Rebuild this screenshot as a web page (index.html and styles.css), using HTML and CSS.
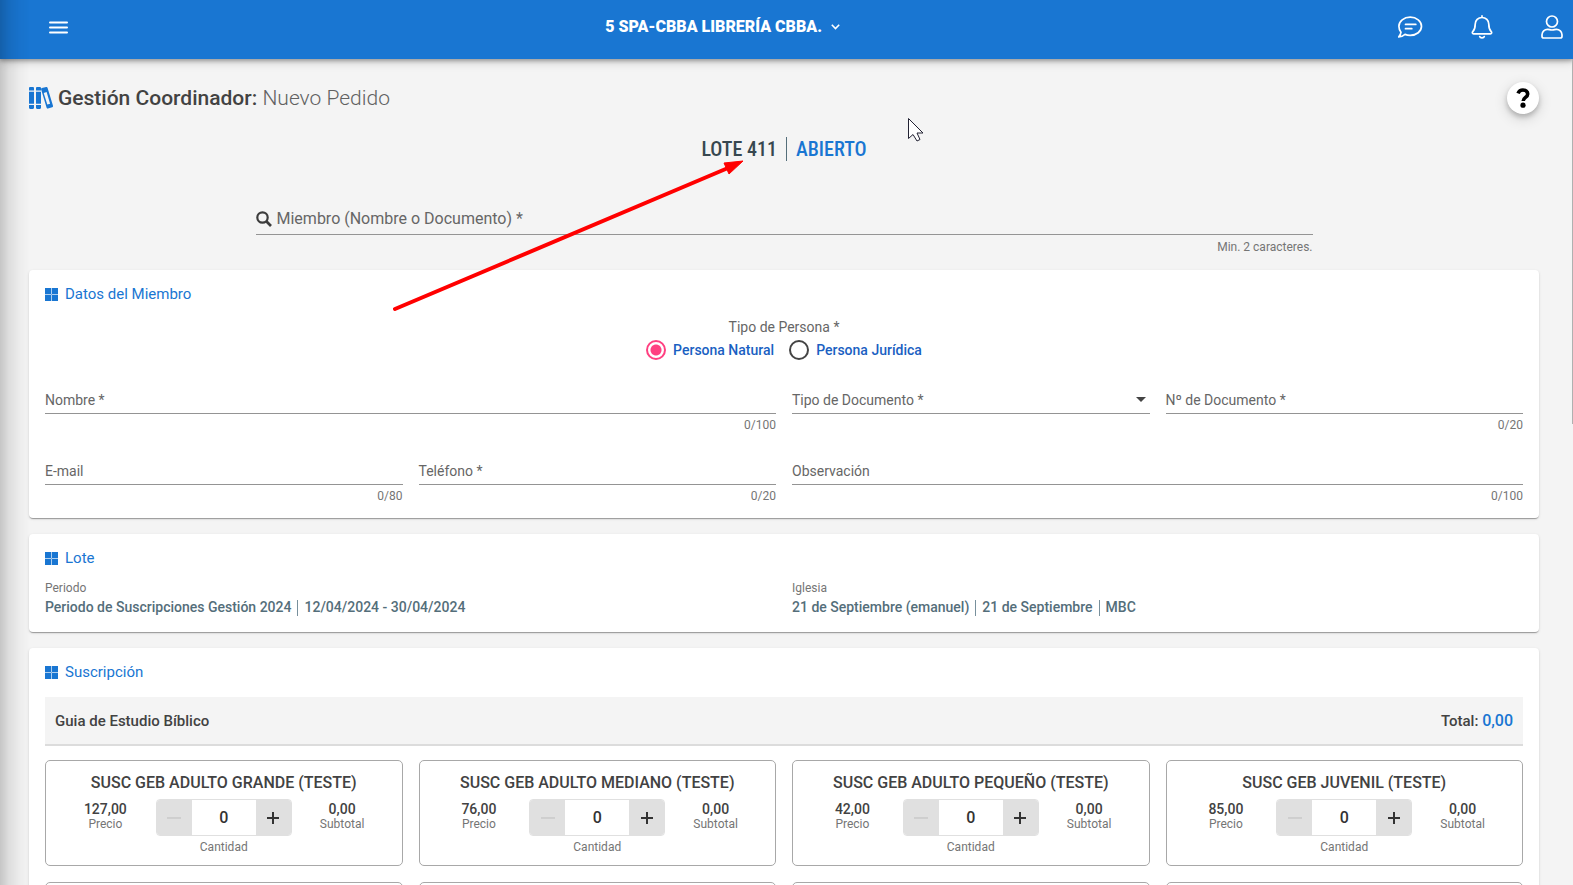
FILE: index.html
```html
<!DOCTYPE html>
<html lang="es">
<head>
<meta charset="utf-8">
<title>Gestión Coordinador: Nuevo Pedido</title>
<meta name="viewport" content="width=device-width, initial-scale=1">
<link rel="stylesheet" href="styles.css">
</head>
<body>
<svg class="sprite" aria-hidden="true">
  <symbol id="i-grid" viewBox="0 0 13 13"><path d="M0 0h6v6H0zM7 0h6v6H7zM0 7h6v6H0zM7 7h6v6H7z" fill="currentColor"/><path d="M6.500 0v13M0 6.500h13" stroke="currentColor" stroke-opacity=".35"/></symbol>
  <symbol id="i-plus" viewBox="0 0 14 14"><path d="M7 1v12M1 7h12" stroke="currentColor" stroke-width="2" fill="none"/></symbol>
  <symbol id="i-minus" viewBox="0 0 14 14"><path d="M0 7h14" stroke="currentColor" stroke-width="1" fill="none"/></symbol>
</svg>

<header class="topbar">
  <button class="icon-btn" type="button" aria-label="Menú">
    <svg width="19" height="13" viewBox="0 0 19 13"><path d="M1 1.500h17M1 6.500h17M1 11.500h17" stroke="#fff" stroke-width="2" stroke-linecap="round"/></svg>
  </button>
  <button class="branch" type="button">5 SPA-CBBA LIBRERÍA CBBA.
    <svg width="9" height="6" viewBox="0 0 9 6"><path d="M.8.8 4.500 4.600 8.200.8" fill="none" stroke="#fff" stroke-width="1.600"/></svg>
  </button>
  <nav class="actions" aria-label="Cuenta">
    <button class="icon-btn" type="button" aria-label="Mensajes">
      <svg width="26" height="24" viewBox="0 0 26 24" fill="none" stroke="#fff" stroke-width="1.700" stroke-linejoin="round" stroke-linecap="round"><path d="M13.200 2.200c6.300 0 11.300 4 11.300 9.100s-5 9.100-11.300 9.100c-1.900 0-3.600-.3-5.200-1-1.700 1.500-4 2.500-6.200 2.500 1.200-1.300 2-3 2.200-4.700C2.700 15.600 1.900 13.500 1.900 11.300c0-5.100 5-9.100 11.300-9.100z"/><path d="M8.500 9.400h10.300M8.500 13.700h6.300"/></svg>
    </button>
    <button class="icon-btn" type="button" aria-label="Notificaciones">
      <svg width="22" height="24" viewBox="0 0 22 24" fill="none" stroke="#fff" stroke-width="1.700" stroke-linejoin="round" stroke-linecap="round"><path d="M11 .9v1.500M11 2.500c3.900 0 6.800 2.900 6.800 6.700 0 5 1.200 6.200 2.400 7.400.9.900.5 2.200-.8 2.200H2.600c-1.300 0-1.700-1.300-.8-2.200 1.200-1.200 2.400-2.400 2.400-7.400 0-3.800 2.900-6.700 6.800-6.700z"/><path d="M8.700 21.500c.5 1.800 4.100 1.800 4.600 0"/></svg>
    </button>
    <button class="icon-btn" type="button" aria-label="Perfil">
      <svg width="22" height="24" viewBox="0 0 22 24" fill="none" stroke="#fff" stroke-width="1.700" stroke-linejoin="round"><circle cx="11" cy="6.500" r="5.500"/><path d="M6.600 14.300c1.700 0 2.100.7 4.400.7s2.700-.7 4.400-.7c3 0 5.600 2.400 5.600 5.500v1.400c0 1-.8 1.800-1.800 1.800H2.800c-1 0-1.800-.8-1.800-1.800v-1.400c0-3.100 2.600-5.500 5.600-5.500z"/></svg>
    </button>
  </nav>
</header>

<main class="page">
  <div class="page-head">
    <svg class="books" width="24" height="22" viewBox="0 0 24 22" fill="#1976d2"><path d="M0 1.200C0 .5.500 0 1.200 0h2.600C4.500 0 5 .5 5 1.200V3.600H0zM0 4.800h5v12H0zM0 18h5v2.800c0 .7-.5 1.200-1.200 1.200H1.200C.5 22 0 21.500 0 20.800zM7 1.200C7 .5 7.500 0 8.200 0h2.600c.7 0 1.200.5 1.200 1.200V3.600H7zM7 4.800h5v12H7zM7 18h5v2.800c0 .7-.5 1.200-1.200 1.200H8.200C7.500 22 7 21.500 7 20.800z"/><path fill-rule="evenodd" d="M12 2.100c0-.6.300-1 .9-1.200L17.200.1c.7-.2 1.200.2 1.400.9L24 18.800c.2.700-.2 1.300-.8 1.500l-4.200 1.300c-.7.200-1.200-.2-1.400-.8zM14.700 6l3.600 11.500 2.800-.8L17.600 5z"/></svg>
    <h1>Gestión Coordinador: <span>Nuevo Pedido</span></h1>
    <button class="help" type="button" aria-label="Ayuda">
      <svg width="14" height="20" viewBox="0 0 14 20"><path d="M2 5.400C3 3.100 4.600 2 6.900 2c2.900 0 4.800 1.600 4.800 3.900 0 3.500-4.500 3.400-4.500 7" fill="none" stroke="#000" stroke-width="3.600"/><circle cx="7" cy="17.200" r="2.600"/></svg>
    </button>
  </div>

  <p class="lot"><strong>LOTE 411</strong><i></i><strong class="open">ABIERTO</strong></p>

  <div class="search field">
    <div class="control">
      <label for="miembro"><svg width="16" height="16" viewBox="0 0 16 16" fill="none" stroke="#3c3c3c"><circle cx="6.500" cy="6.500" r="5.200" stroke-width="2.200"/><path d="m10.300 10.300 4.700 4.700" stroke-width="2.700"/></svg>Miembro (Nombre o Documento) *</label>
      <input id="miembro" type="text">
    </div>
    <small>Min. 2 caracteres.</small>
  </div>

  <section class="card">
    <h2><svg width="13" height="13"><use href="#i-grid"/></svg>Datos del Miembro</h2>
    <fieldset class="person">
      <legend>Tipo de Persona *</legend>
      <div class="radios">
        <label><input type="radio" name="persona" checked>Persona Natural</label>
        <label><input type="radio" name="persona">Persona Jurídica</label>
      </div>
    </fieldset>
    <div class="grid form">
      <div class="field wide"><div class="control"><label for="nombre">Nombre *</label><input id="nombre" type="text" maxlength="100"></div><small>0/100</small></div>
      <div class="field"><div class="control"><label for="tipo">Tipo de Documento *</label><select id="tipo"><option></option></select><svg class="caret" width="10" height="5" viewBox="0 0 10 5"><path d="M0 0h10L5 5z" fill="#444"/></svg></div></div>
      <div class="field"><div class="control"><label for="doc">Nº de Documento *</label><input id="doc" type="text" maxlength="20"></div><small>0/20</small></div>
      <div class="field"><div class="control"><label for="email">E-mail</label><input id="email" type="email" maxlength="80"></div><small>0/80</small></div>
      <div class="field"><div class="control"><label for="tel">Teléfono *</label><input id="tel" type="tel" maxlength="20"></div><small>0/20</small></div>
      <div class="field wide"><div class="control"><label for="obs">Observación</label><input id="obs" type="text" maxlength="100"></div><small>0/100</small></div>
    </div>
  </section>

  <section class="card">
    <h2><svg width="13" height="13"><use href="#i-grid"/></svg>Lote</h2>
    <dl class="grid facts">
      <div class="wide"><dt>Periodo</dt><dd>Periodo de Suscripciones Gestión 2024<i></i>12/04/2024 - 30/04/2024</dd></div>
      <div class="wide"><dt>Iglesia</dt><dd>21 de Septiembre (emanuel)<i></i>21 de Septiembre<i></i>MBC</dd></div>
    </dl>
  </section>

  <section class="card">
    <h2><svg width="13" height="13"><use href="#i-grid"/></svg>Suscripción</h2>
    <div class="group"><h3>Guia de Estudio Bíblico</h3><p>Total: <b>0,00</b></p></div>
    <div class="grid products">
      <article class="product">
        <h4>SUSC GEB ADULTO GRANDE (TESTE)</h4>
        <div class="order">
          <p><b>127,00</b>Precio</p>
          <div class="qty"><div class="stepper"><button type="button" disabled aria-label="Restar"><svg width="14" height="14"><use href="#i-minus"/></svg></button><input id="q1" type="text" value="0"><button type="button" aria-label="Sumar"><svg width="14" height="14"><use href="#i-plus"/></svg></button></div><label for="q1">Cantidad</label></div>
          <p><b>0,00</b>Subtotal</p>
        </div>
      </article>
      <article class="product">
        <h4>SUSC GEB ADULTO MEDIANO (TESTE)</h4>
        <div class="order">
          <p><b>76,00</b>Precio</p>
          <div class="qty"><div class="stepper"><button type="button" disabled aria-label="Restar"><svg width="14" height="14"><use href="#i-minus"/></svg></button><input id="q2" type="text" value="0"><button type="button" aria-label="Sumar"><svg width="14" height="14"><use href="#i-plus"/></svg></button></div><label for="q2">Cantidad</label></div>
          <p><b>0,00</b>Subtotal</p>
        </div>
      </article>
      <article class="product">
        <h4>SUSC GEB ADULTO PEQUEÑO (TESTE)</h4>
        <div class="order">
          <p><b>42,00</b>Precio</p>
          <div class="qty"><div class="stepper"><button type="button" disabled aria-label="Restar"><svg width="14" height="14"><use href="#i-minus"/></svg></button><input id="q3" type="text" value="0"><button type="button" aria-label="Sumar"><svg width="14" height="14"><use href="#i-plus"/></svg></button></div><label for="q3">Cantidad</label></div>
          <p><b>0,00</b>Subtotal</p>
        </div>
      </article>
      <article class="product">
        <h4>SUSC GEB JUVENIL (TESTE)</h4>
        <div class="order">
          <p><b>85,00</b>Precio</p>
          <div class="qty"><div class="stepper"><button type="button" disabled aria-label="Restar"><svg width="14" height="14"><use href="#i-minus"/></svg></button><input id="q4" type="text" value="0"><button type="button" aria-label="Sumar"><svg width="14" height="14"><use href="#i-plus"/></svg></button></div><label for="q4">Cantidad</label></div>
          <p><b>0,00</b>Subtotal</p>
        </div>
      </article>
      <article class="product"></article>
      <article class="product"></article>
      <article class="product"></article>
      <article class="product"></article>
    </div>
  </section>
</main>

<div class="drawer-shadow"></div>
<div class="scroll-thumb"></div>
<svg class="arrow" width="350" height="152" viewBox="0 0 350 152" aria-hidden="true"><path d="M2 149 335 8" stroke="#f00" stroke-width="4" stroke-linecap="round"/><path d="M350 1 331 3 336 14z" fill="#f00" stroke="#f00"/></svg>
<svg class="pointer" width="16" height="24" viewBox="0 0 16 24" aria-hidden="true"><path d="M.5.500v20l4.500-4 4 6.500 3-1.500-3-6.500h6z" fill="#fff" stroke="#223" stroke-width="1"/></svg>
</body>
</html>
```

FILE: styles.css
```css
* { box-sizing: border-box; margin: 0; padding: 0; }

html, body { height: 100%; }

body {
  background: #f4f4f4;
  color: #424242;
  font: 400 14px/20px Roboto, "Liberation Sans", sans-serif;
  overflow: hidden;
}

button, input, select { font: inherit; color: inherit; border: 0; background: none; }
button { cursor: pointer; }
svg { display: block; flex: none; }
.sprite { position: absolute; width: 0; height: 0; }

/* Top bar */
.topbar {
  position: relative;
  z-index: 1;
  height: 59px;
  padding: 0 10px 5px 49px;
  display: grid;
  grid-template-columns: 10fr auto 13fr;
  align-items: center;
  background: #1976d2;
  color: #fff;
  box-shadow: 0 2px 4px rgba(0, 0, 0, .3), 0 3px 10px rgba(0, 0, 0, .14);
}
.icon-btn { justify-self: start; }
.branch {
  display: flex;
  align-items: center;
  gap: 9px;
  font-size: 16px;
  font-weight: 900;
}
.actions { display: flex; justify-content: flex-end; align-items: center; gap: 48px; }

/* Page */
.page { padding: 23px 34px 0 29px; }
.page-head { display: flex; align-items: center; gap: 5px; }
h1 { flex: 1; font-size: 21px; line-height: 32px; font-weight: 500; }
h1 span { font-weight: 300; color: #616161; }
.help {
  width: 32px;
  height: 32px;
  display: grid;
  place-items: center;
  border-radius: 50%;
  background: #fff;
  box-shadow: 0 3px 5px rgba(0, 0, 0, .2), 0 4px 14px rgba(0, 0, 0, .16);
}

.lot {
  display: flex;
  justify-content: center;
  align-items: center;
  gap: 9px;
  margin-top: 23px;
  font: 500 20px/24px "Roboto Condensed", Roboto, sans-serif;
  color: #37474f;
}
.lot strong { font-weight: 500; }
.lot i { width: 1px; height: 24px; background: #546e7a; }
.lot .open { color: #1976d2; }

/* Fields with an underline */
.field { color: #666; }
.control {
  display: grid;
  align-items: center;
  border-bottom: 1px solid #949494;
}
.control > * { grid-area: 1 / 1; }
.control label { display: flex; align-items: center; gap: 5px; height: 27px; }
.control input, .control select { width: 100%; height: 27px; appearance: none; outline: none; }
.caret { justify-self: end; margin-right: 4px; }
.field small { display: block; height: 22px; font-size: 12px; line-height: 22px; text-align: right; color: #757575; }
.search { width: 70%; margin: 45px auto 0; font-size: 16px; }
.search .control label { height: 28px; padding-bottom: 2px; }
.search small { line-height: 25px; }

/* Cards */
.card {
  margin-bottom: 16px;
  padding: 12px 16px 11px;
  border-radius: 4px;
  background: #fff;
  box-shadow: 0 2px 1px -1px rgba(0, 0, 0, .2), 0 1px 1px rgba(0, 0, 0, .14), 0 1px 3px rgba(0, 0, 0, .12);
}
.search + .card { margin-top: 13px; }
h2 {
  display: flex;
  align-items: center;
  gap: 7px;
  font-size: 15px;
  line-height: 24px;
  font-weight: 400;
  color: #1976d2;
}
.grid { display: grid; grid-template-columns: repeat(4, minmax(0, 1fr)); column-gap: 16px; }
.wide { grid-column: span 2; }

.person { border: 0; margin-top: 10px; }
.person legend { margin: 0 auto; color: #666; line-height: 22px; }
.radios { display: flex; justify-content: center; gap: 15px; }
.radios label { display: flex; align-items: center; gap: 7px; height: 24px; font-weight: 500; color: #1a5fc2; }
.radios input {
  appearance: none;
  width: 20px;
  height: 20px;
  border: 2px solid #444;
  border-radius: 50%;
}
.radios input:checked { border-color: #ff4081; background: radial-gradient(circle, #ff4081 5px, transparent 6px); }
.form { row-gap: 21px; margin-top: 24px; }

.facts { margin: 9px 0 4px; color: #546e7a; }
.facts dt { font-size: 12px; line-height: 19px; color: #757575; }
.facts dd { display: flex; align-items: center; gap: 6px; font-weight: 500; line-height: 19px; }
.facts i { width: 1px; height: 16px; background: #78909c; }

.group {
  display: flex;
  justify-content: space-between;
  align-items: center;
  height: 49px;
  margin-top: 13px;
  padding: 0 10px;
  background: #f4f4f4;
  border-bottom: 2px solid #dcdcdc;
  font-size: 15px;
  font-weight: 500;
}
.group h3 { font-size: 15px; font-weight: 500; }
.group b { font-size: 16px; font-weight: 500; color: #1976d2; }

.products { margin-top: 14px; row-gap: 16px; }
.product {
  min-height: 106px;
  padding: 10px 29px 7px;
  border: 1px solid #a8a8a8;
  border-radius: 5px;
  text-align: center;
}
h4 { font-size: 16px; line-height: 24px; font-weight: 500; }
.order { display: grid; grid-template-columns: 1fr 136px 1fr; column-gap: 20px; margin-top: 4px; font-size: 12px; color: #757575; }
.order p { line-height: 14px; padding-top: 2px; }
.order b { display: block; font-size: 14px; line-height: 16px; font-weight: 500; color: #424242; }
.qty label { display: block; line-height: 22px; }
.stepper {
  display: grid;
  grid-template-columns: 35px 1fr 35px;
  height: 37px;
  border: 1px solid #e0e0e0;
  border-radius: 4px;
  overflow: hidden;
}
.stepper button { display: grid; place-items: center; background: #e0e0e0; color: #333; }
.stepper button:disabled { color: #bdbdbd; }
.stepper input { width: 100%; text-align: center; font-size: 16px; font-weight: 500; color: #333; }

/* Layers over the page */
.drawer-shadow {
  position: fixed;
  z-index: 2;
  inset: 0 auto 0 0;
  width: 30px;
  pointer-events: none;
  background: linear-gradient(90deg, rgba(0, 0, 0, .19), rgba(0, 0, 0, .09) 30%, rgba(0, 0, 0, .03) 65%, transparent);
}
.scroll-thumb { position: fixed; z-index: 2; top: 59px; right: 0; width: 1px; height: 365px; background: #b0b0b0; }
.arrow { position: absolute; z-index: 3; left: 393px; top: 160px; pointer-events: none; }
.pointer { position: absolute; z-index: 3; left: 908px; top: 118px; pointer-events: none; }
```
